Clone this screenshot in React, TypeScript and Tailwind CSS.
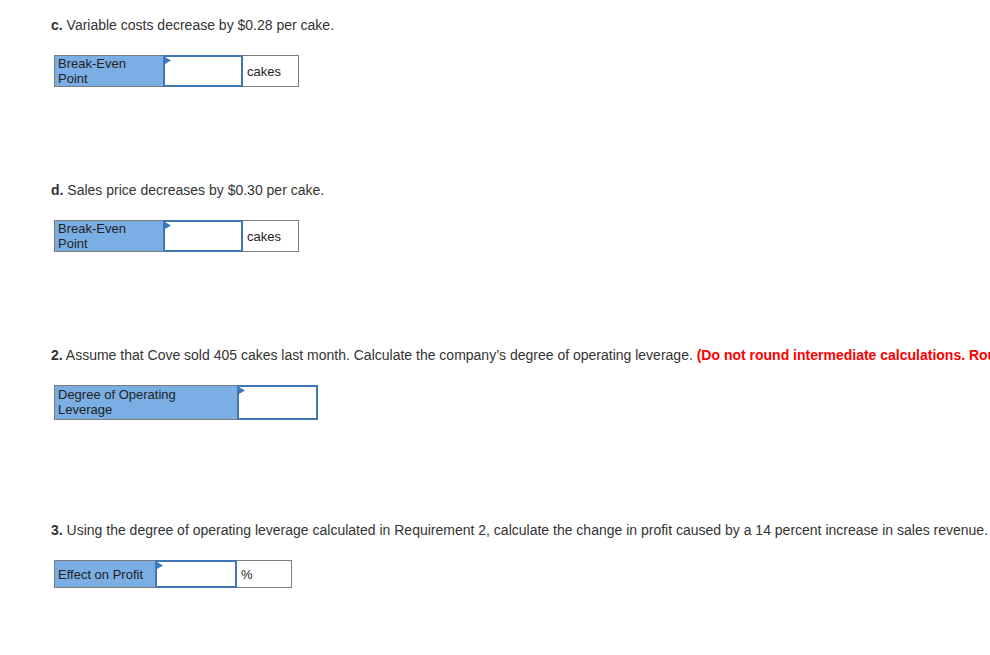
import React from "react";

const font = { fontFamily: '"Liberation Sans", Arial, sans-serif' };

function Marker() {
  return (
    <svg className="absolute left-0 top-0" width="7" height="8" viewBox="0 0 7 8">
      <polygon points="0,0 6,3.5 0,7" fill="#3c78bd" />
    </svg>
  );
}

function InputCell({ w, h }: { w: string; h: string }) {
  return (
    <div className={`relative ${w} ${h} border-2 border-[#3f76b3] bg-white`}>
      <Marker />
    </div>
  );
}

function Heading({ label, children }: { label: string; children: React.ReactNode }) {
  return (
    <div className="text-[14px] leading-[16px] text-[#333] whitespace-nowrap">
      <span className="font-bold">{label}</span> {children}
    </div>
  );
}

export default function App() {
  return (
    <div className="w-[990px] h-[655px] overflow-hidden bg-white pl-[51px] pt-[17px]" style={font}>
      <Heading label="c.">Variable costs decrease by $0.28 per cake.</Heading>
      <div className="mt-[22px] ml-[3px] flex text-[13px] leading-[15px] text-[#222]">
        <div className="w-[109px] h-[32px] border border-[#7b7b7b] border-r-0 bg-[#7aaee4] pl-[3px]">
          Break-Even<br />Point
        </div>
        <InputCell w="w-[80px]" h="h-[32px]" />
        <div className="w-[56px] h-[32px] border border-[#7b7b7b] border-l-0 bg-white pl-[4px] flex items-center">
          cakes
        </div>
      </div>

      <div className="mt-[95px]">
        <Heading label="d.">Sales price decreases by $0.30 per cake.</Heading>
      </div>
      <div className="mt-[22px] ml-[3px] flex text-[13px] leading-[15px] text-[#222]">
        <div className="w-[109px] h-[32px] border border-[#7b7b7b] border-r-0 bg-[#7aaee4] pl-[3px]">
          Break-Even<br />Point
        </div>
        <InputCell w="w-[80px]" h="h-[32px]" />
        <div className="w-[56px] h-[32px] border border-[#7b7b7b] border-l-0 bg-white pl-[4px] flex items-center">
          cakes
        </div>
      </div>

      <div className="mt-[95px]">
        <Heading label="2.">
          Assume that Cove sold 405 cakes last month. Calculate the company’s degree of operating leverage.{" "}
          <span className="font-bold text-[#ff0000]">
            (Do not round intermediate calculations. Round your answer to 2 decimal places.)
          </span>
        </Heading>
      </div>
      <div className="mt-[22px] ml-[3px] flex text-[13px] leading-[15px] text-[#222]">
        <div className="w-[183px] h-[35px] border border-[#7b7b7b] border-r-0 bg-[#7aaee4] pl-[3px] pt-[1px]">
          Degree of Operating<br />Leverage
        </div>
        <InputCell w="w-[81px]" h="h-[35px]" />
      </div>

      <div className="mt-[102px]">
        <Heading label="3.">
          Using the degree of operating leverage calculated in Requirement 2, calculate the change in profit caused by a 14 percent increase in sales revenue.
        </Heading>
      </div>
      <div className="mt-[22px] ml-[3px] flex text-[13px] leading-[15px] text-[#222]">
        <div className="w-[101px] h-[28px] border border-[#7b7b7b] border-r-0 bg-[#7aaee4] pl-[3px] flex items-center">
          Effect on Profit
        </div>
        <InputCell w="w-[82px]" h="h-[28px]" />
        <div className="w-[55px] h-[28px] border border-[#7b7b7b] border-l-0 bg-white pl-[4px] flex items-center">
          %
        </div>
      </div>
    </div>
  );
}
